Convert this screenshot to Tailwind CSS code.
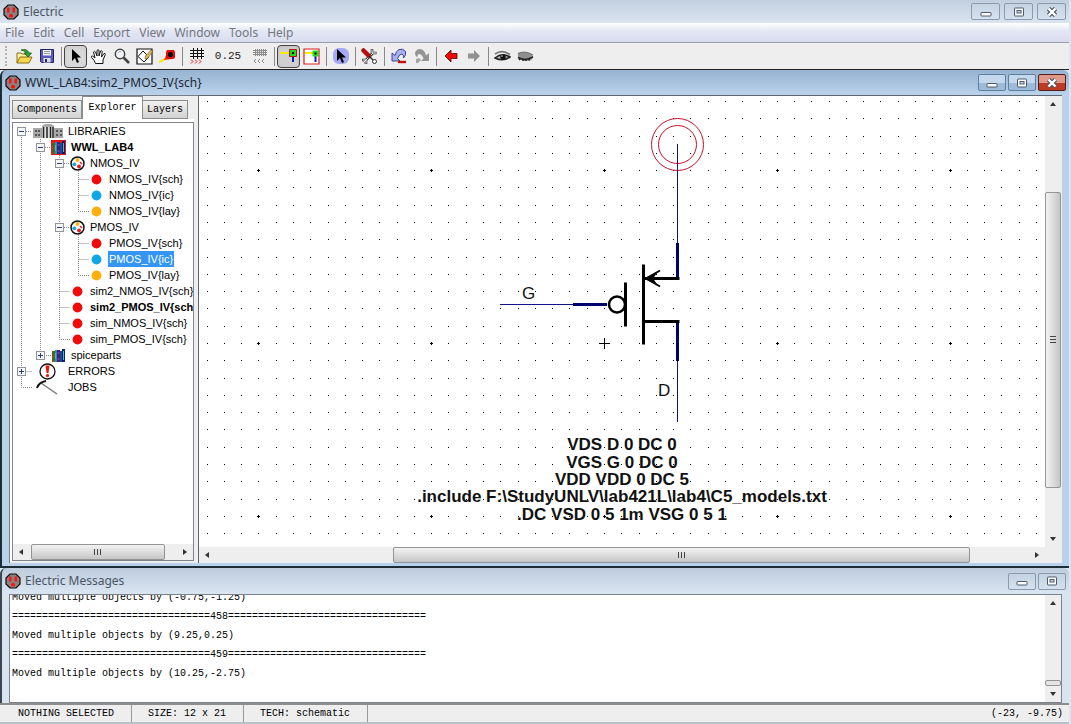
<!DOCTYPE html>
<html lang="en">
<head>
<meta charset="utf-8">
<title>Electric</title>
<script src="https://cdn.jsdelivr.net/npm/@tailwindcss/browser@4"></script>
</head>
<body class="h-screen overflow-hidden bg-[#dbe6f2] font-['Noto_Sans','Open_Sans',sans-serif] text-xs text-[#4a5563]">

<svg class="hidden" aria-hidden="true">
  <symbol id="outlet" viewBox="0 0 16 16">
    <path d="M5 1h6l4 4v6l-4 4H5l-4-4V5z" fill="#8a8380" stroke="#150808" stroke-width="1.200"/>
    <path d="M4 3.500h2.500v5H4zM9.500 3.500H12v5H9.500z" fill="#fa1414"/>
    <path d="M6 13.200v-2.200l2-1.500 2 1.500v2.200z" fill="#fa1414"/>
  </symbol>
  <symbol id="min" viewBox="0 0 12 10"><rect x="1" y="5.500" width="10" height="3.500" rx=".5" fill="#fff" stroke="#4d5a6b"/></symbol>
  <symbol id="max" viewBox="0 0 12 10"><rect x="1.500" y="1" width="9" height="8" rx=".5" fill="#fff" stroke="#4d5a6b"/><rect x="4" y="3.500" width="4" height="2.500" fill="#c9d8e8" stroke="#4d5a6b"/></symbol>
  <symbol id="close" viewBox="0 0 12 10"><path d="M2.500 1.500l7 7M9.500 1.500l-7 7" stroke="#4d5a6b" stroke-width="4.600"/><path d="M2.500 1.500l7 7M9.500 1.500l-7 7" stroke="#fff" stroke-width="2.400"/></symbol>
  <symbol id="plus" viewBox="0 0 9 9"><rect x=".5" y=".5" width="8" height="8" fill="#f6f7f9" stroke="#8f959c"/><path d="M2 4.500h5M4.500 2v5" stroke="#2b3f78"/></symbol>
  <symbol id="minus" viewBox="0 0 9 9"><rect x=".5" y=".5" width="8" height="8" fill="#f6f7f9" stroke="#8f959c"/><path d="M2 4.500h5" stroke="#2b3f78"/></symbol>
  <symbol id="cell" viewBox="0 0 15 15"><circle cx="7.500" cy="7.500" r="6.500" fill="#fff" stroke="#111" stroke-width="1.500"/><circle cx="7.500" cy="4" r="1.900" fill="#ffb010"/><circle cx="4.300" cy="8.300" r="1.900" fill="#12a6e6"/><circle cx="9" cy="10.500" r="1.900" fill="#e8141c"/><path d="M10 6l2 2" stroke="#e8141c" stroke-width="1.500"/></symbol>
  <symbol id="books" viewBox="0 0 15 15"><path d="M1 3h3v11H1z" fill="#7a5a12"/><path d="M4 2h3v12H4z" fill="#1199bb"/><path d="M6 2h3v12H6z" fill="#4b1c78"/><path d="M9 3h2v11H9z" fill="#1a4d8a"/><path d="M11 1h3v13h-3z" fill="#101c66"/><path d="M1 5h3M1 11h3" stroke="#1c6b30"/><path d="M4.500 5v6M12.500 3v9" stroke="#29c6e8"/><path d="M6.500 5h2M6.500 11h2" stroke="#c54ad0"/></symbol>
  <symbol id="ball" viewBox="0 0 15 15"><circle cx="7.500" cy="7.500" r="4.900" fill="currentColor"/></symbol>
  <symbol id="up" viewBox="0 0 8 8"><path d="M4 2l3 4H1z" fill="#333"/></symbol>
  <symbol id="down" viewBox="0 0 8 8"><path d="M4 6l3-4H1z" fill="#333"/></symbol>
  <symbol id="left" viewBox="0 0 8 8"><path d="M2 4l4-3v6z" fill="#333"/></symbol>
  <symbol id="right" viewBox="0 0 8 8"><path d="M6 4L2 1v6z" fill="#333"/></symbol>
  <symbol id="cursor" viewBox="0 0 16 16"><path d="M4 1v12l3-3 2 5 2-1-2-4.500h4z" fill="#000"/></symbol>
</svg>

<div class="flex h-full flex-col border-r-2 border-[#dbe6f2]">
  <!-- Application title bar -->
  <header class="flex h-[23px] shrink-0 items-center gap-1 bg-linear-to-b from-[#c2cfde] to-[#dae5f0] pr-[3px] pl-[3px]">
    <svg class="size-4"><use href="#outlet"/></svg>
    <h1 class="flex-1">Electric</h1>
    <div class="flex gap-1">
      <button aria-label="Minimize" class="flex h-[17px] w-[29px] items-center justify-center rounded-xs border border-[#8a9bb0]"><svg class="h-[10px] w-3"><use href="#min"/></svg></button>
      <button aria-label="Maximize" class="flex h-[17px] w-[29px] items-center justify-center rounded-xs border border-[#8a9bb0]"><svg class="h-[10px] w-3"><use href="#max"/></svg></button>
      <button aria-label="Close" class="flex h-[17px] w-[29px] items-center justify-center rounded-xs border border-[#8a9bb0]"><svg class="h-[10px] w-3"><use href="#close"/></svg></button>
    </div>
  </header>

  <nav class="flex h-5 shrink-0 items-center gap-[9px] border-b border-[#9a9cb4] bg-linear-to-b from-white via-[#e4e8f5] via-40% to-[#d8dcef] pl-[5px] text-[#75777d]">
    <button>File</button><button>Edit</button><button>Cell</button><button>Export</button><button>View</button><button>Window</button><button>Tools</button><button>Help</button>
  </nav>

  <!-- Tool bar -->
  <div role="toolbar" class="flex h-[27px] shrink-0 items-center border-b border-[#222] bg-[#eeeeee] pl-[5px]">
    <span class="mr-[5px] h-5 w-0 border-l-2 border-dotted border-[#b4b4b4]"></span>
    <button aria-label="Open library" class="flex size-[23px] items-center justify-center">
      <svg class="size-[18px]" viewBox="0 0 18 18"><path d="M2 16V6h4l1 1h6v3" fill="#fff3a8" stroke="#8a6d12"/><path d="M2 16l3-6h12l-3 6z" fill="#f6d84a" stroke="#8a6d12"/><path d="M6 3q6-2 8 3h2.500L13 10 9 6h2q-1-2.500-5-3z" fill="#2fa32f" stroke="#14601a" stroke-width=".8"/></svg></button>
    <button aria-label="Save library" class="flex size-[23px] items-center justify-center">
      <svg class="size-4" viewBox="0 0 16 16"><path d="M1.500 1.500h13v13h-12l-1-1z" fill="#5a5ab4" stroke="#22226c"/><path d="M4 2h8v5.500H4z" fill="#f4f4ff"/><path d="M5 3.500h6M5 5.500h6" stroke="#999"/><path d="M4.500 10h7v4.500h-7z" fill="#ddd"/><path d="M6 11h2v3H6z" fill="#22226c"/></svg></button>
    <span class="mr-[2px] ml-[3px] h-[19px] w-px bg-[#888]"></span>
    <button aria-label="Select" aria-pressed="true" class="flex size-[23px] items-center justify-center rounded border border-[#444] bg-[#d9d9d9] shadow-inner"><svg class="size-4"><use href="#cursor"/></svg></button>
    <button aria-label="Pan" class="flex size-[23px] items-center justify-center">
      <svg class="size-[17px]" viewBox="0 0 17 17"><path d="M5.500 15.500Q4.500 12 1.500 9.500 1 8 2.500 8L5 10 3.500 4Q4.500 2.500 5.500 4l1.500 4V2.500q1-1.500 2 0V8l1.500-5q1.300-1 1.700.5L11.500 9 14 5.500q1.500-.5 1.300 1L13 12v3.500z" fill="#fff" stroke="#111"/></svg></button>
    <button aria-label="Zoom" class="flex size-[23px] items-center justify-center">
      <svg class="size-4" viewBox="0 0 16 16"><circle cx="6" cy="6" r="4.700" fill="#f2f6fa" stroke="#444" stroke-width="1.500"/><path d="M9.500 9.500L15 15" stroke="#444" stroke-width="2.600"/><path d="M4 5q1-2 3-1.500" stroke="#aaa" fill="none"/></svg></button>
    <button aria-label="Outline edit" class="flex size-[23px] items-center justify-center">
      <svg class="size-[17px]" viewBox="0 0 17 17"><path d="M1 1h15v15H1z" fill="#fff" stroke="#111" stroke-width="1.200"/><path d="M7 3L2 8.500 8 14l5-5z" fill="none" stroke="#111"/><path d="M9.500 8L15 2l1.500 1.500L12 10l-3 1z" fill="#e6b45c" stroke="#7a5a20" stroke-width=".6"/></svg></button>
    <button aria-label="Measure" class="flex size-[23px] items-center justify-center">
      <svg class="size-[17px]" viewBox="0 0 17 17"><path d="M0 14l8-4" stroke="#ffe600" stroke-width="2"/><path d="M5 12l3-7 5 6z" fill="#f03018"/><path d="M8 2h7l1 2v6l-2 1H8L7 9V4z" fill="#e00f0f"/><circle cx="11.500" cy="6.500" r="2.600" fill="#000"/></svg></button>
    <span class="mr-[2px] ml-[3px] h-[19px] w-px bg-[#888]"></span>
    <button aria-label="Coarser grid" class="flex size-[23px] items-center justify-center">
      <svg class="size-4" viewBox="0 0 16 16" fill="none"><path d="M1 2.500h14M1 5.500h14M1 8.500h14M4.500 0v11M8.500 0v11M12.500 0v11" stroke="#111"/><path d="M2 11.500l2 2-2 2M6 11.500l2 2-2 2M10 11.500l2 2-2 2" stroke="#e0181c"/></svg></button>
    <span class="w-10 text-center font-['Liberation_Mono',monospace] text-[11px] text-[#222]">0.25</span>
    <button aria-label="Finer grid" class="flex size-[23px] items-center justify-center">
      <svg class="size-4" viewBox="0 0 16 16" fill="none" stroke="#8c8c8c"><path d="M1 2.500h14M1 4.500h14M1 6.500h14M3.500 1v7M5.500 1v7M7.500 1v7M9.500 1v7M11.500 1v7M13.500 1v7"/><path d="M4 11l-2 2 2 2M8 11l-2 2 2 2M12 11l-2 2 2 2"/></svg></button>
    <span class="mr-[2px] ml-[3px] h-[19px] w-px bg-[#888]"></span>
    <button aria-label="Select objects" aria-pressed="true" class="flex size-[23px] items-center justify-center rounded border border-[#444] bg-[#d0d0d0] shadow-inner">
      <svg class="size-[17px]" viewBox="0 0 17 17"><path d="M0 5h9" stroke="#f8f000" stroke-width="2"/><path d="M13 8v6" stroke="#1414c8" stroke-width="2"/><path d="M9.500 1.500h7v7h-7z" fill="#20d820" stroke="#b81414"/><path d="M12 4h2v2h-2z" fill="#000"/></svg></button>
    <button aria-label="Select area" class="flex size-[23px] items-center justify-center">
      <svg class="size-[17px]" viewBox="0 0 17 17"><path d="M1 1h15v15H1z" fill="#fff" stroke="#d82020" stroke-width="1.200"/><path d="M2 5h8" stroke="#f8f000" stroke-width="2"/><path d="M12.500 8v6" stroke="#1414c8" stroke-width="2"/><path d="M9.500 2.500h6v6h-6z" fill="#20e020"/><path d="M11.500 4.500h2v2h-2z" fill="#000"/></svg></button>
    <span class="mr-[2px] ml-[3px] h-[19px] w-px bg-[#888]"></span>
    <button aria-label="Toggle special select" class="flex size-[23px] items-center justify-center"><svg class="size-4 rounded-md bg-[#a6a9f6]"><use href="#cursor"/></svg></button>
    <span class="mr-[2px] ml-[3px] h-[19px] w-px bg-[#888]"></span>
    <button aria-label="Preferences" class="flex size-[23px] items-center justify-center">
      <svg class="size-[17px]" viewBox="0 0 17 17" fill="none"><path d="M3 14l9-9M11 1v4h4.500M1 12h4v4" stroke="#333" stroke-width="2.600"/><path d="M3 14l9-9M11 1.500V5h4M1.500 12H5v3.500" stroke="#fff" stroke-width="1"/><path d="M2.500 2.500l5 5" stroke="#b80c10" stroke-width="4.500" stroke-linecap="round"/><path d="M8 8l4 4" stroke="#333" stroke-width="1.500"/><circle cx="13.500" cy="13.500" r="2" fill="#fff" stroke="#333"/></svg></button>
    <span class="mr-[2px] ml-[3px] h-[19px] w-px bg-[#888]"></span>
    <button aria-label="Undo" class="flex size-[23px] items-center justify-center">
      <svg class="size-4" viewBox="0 0 16 16"><path d="M1 5v8h8L6.500 10.500Q8 6 11 6q2 .5 1.500 4 3-3 2-6.500Q12 0 8 1.500 5 3 4 7.500z" fill="#a7b2ee" stroke="#2c3590" stroke-width=".9"/><path d="M7 14h8" stroke="#c01414" stroke-width="2.400"/></svg></button>
    <button aria-label="Redo" class="flex size-[23px] items-center justify-center">
      <svg class="size-4" viewBox="0 0 16 16"><path d="M15 5v8H7l2.500-2.500Q8 6 5 6q-2 .5-1.500 3.500Q0 7 1.500 3.500 4 0 8 1.500q3 1.500 4 6z" fill="#949494"/><path d="M2 11q4-2 5 1l-3 3H2z" fill="#a4a4a4"/></svg></button>
    <span class="mr-[2px] ml-[3px] h-[19px] w-px bg-[#888]"></span>
    <button aria-label="Back" class="flex size-[23px] items-center justify-center"><svg class="size-[14px]" viewBox="0 0 14 14"><path d="M1 7l6-6v3.500h6v5H7V13z" fill="#f00808" stroke="#550000" stroke-width=".8"/></svg></button>
    <button aria-label="Forward" class="flex size-[23px] items-center justify-center"><svg class="size-[14px]" viewBox="0 0 14 14"><path d="M13 7L7 1v3.500H1v5h6V13z" fill="#919191"/></svg></button>
    <span class="mr-[2px] ml-[3px] h-[19px] w-px bg-[#888]"></span>
    <button aria-label="Expand" class="flex size-[23px] items-center justify-center">
      <svg class="size-[17px]" viewBox="0 0 17 17" fill="none"><path d="M1 6Q8 1 16 6.500" stroke="#777" stroke-width="1.600"/><path d="M1 10Q8 4 16 9 9 14 1 10z" fill="#b4b4b4" stroke="#222" stroke-width="1.600"/><circle cx="9" cy="9" r="2.700" fill="#111"/><circle cx="8" cy="8" r=".7" fill="#fff"/></svg></button>
    <button aria-label="Unexpand" class="flex size-[23px] items-center justify-center">
      <svg class="size-[17px]" viewBox="0 0 17 17" fill="none"><path d="M1 5Q9 2 16 8q0 3-3 4.500Q5 14 1 9z" fill="#8f8f8f"/><path d="M1 5.500Q8 2 16 7" stroke="#777" stroke-width="1.200"/><path d="M1 9.500q7 4 15-.5M3 11l-1 1M6 12v1M9 12v1M12 11.500l.5 1" stroke="#222" stroke-width="1.500"/></svg></button>
  </div>

  <!-- Schematic editor window -->
  <section class="flex min-h-0 flex-1 flex-col rounded-t-md border-b-2 border-l-2 border-[#1b2e38] bg-linear-to-b from-[#97b3d1] to-[#b9d1ea] to-[24px] pr-[7px] pb-[3px] pl-[7px]">
    <header class="flex h-[25px] shrink-0 items-center gap-1 text-[#1c2733]">
      <svg class="-ml-1 size-4"><use href="#outlet"/></svg>
      <h2 class="flex-1">WWL_LAB4:sim2_PMOS_IV{sch}</h2>
      <div class="-mr-1 flex gap-[2px]">
        <button aria-label="Minimize" class="flex h-[17px] w-7 items-center justify-center rounded-xs border border-[#5f7f9f] bg-linear-to-b from-[#c3d8ec] from-50% to-[#9dbbd8] to-50%"><svg class="h-[10px] w-3"><use href="#min"/></svg></button>
        <button aria-label="Maximize" class="flex h-[17px] w-7 items-center justify-center rounded-xs border border-[#5f7f9f] bg-linear-to-b from-[#c3d8ec] from-50% to-[#9dbbd8] to-50%"><svg class="h-[10px] w-3"><use href="#max"/></svg></button>
        <button aria-label="Close" class="flex h-[17px] w-7 items-center justify-center rounded-xs border border-[#551d1c] bg-linear-to-b from-[#e0988a] from-50% to-[#bb3b24] to-50%"><svg class="h-[10px] w-3"><use href="#close"/></svg></button>
      </div>
    </header>

    <div class="flex min-h-0 flex-1">
      <!-- Explorer side panel -->
      <aside class="flex w-[189px] shrink-0 flex-col border-t border-l border-[#777e88] bg-[#eeeeee] pb-[2px]">
        <div role="tablist" class="flex h-[23px] items-end pl-[2px] font-['Liberation_Mono',monospace] text-[10px] text-black">
          <button role="tab" class="h-[19px] w-[70px] border border-[#8c8c8c] bg-linear-to-b from-[#f2f2f2] to-[#d2d2d2]">Components</button>
          <button role="tab" aria-selected="true" class="h-[23px] w-[61px] border-x border-t border-[#8c8c8c] bg-white">Explorer</button>
          <button role="tab" class="h-[19px] w-[45px] border border-l-0 border-[#8c8c8c] bg-linear-to-b from-[#f2f2f2] to-[#d2d2d2]">Layers</button>
        </div>
        <div class="mr-1 flex min-h-0 flex-1 flex-col bg-white pt-[3px]">
          <div class="ml-[2px] flex min-h-0 flex-1 flex-col border border-[#82858d]">
            <div class="relative min-h-0 flex-1 overflow-hidden font-['Liberation_Sans',Arial,sans-serif] text-[11px] whitespace-nowrap text-black">
              <svg class="absolute inset-0 h-[272px] w-full" fill="none" stroke="#8a8a8a" stroke-dasharray="1 1" aria-hidden="true">
                <path d="M8.500 12v252.500H19M8.500 248.500H19M13 8.500h6M27.500 16v216.500H38M32 24.500h6M46.500 32v184.500H57M51 40.500h6M51 104.500h6M46.500 168.500H57M46.500 184.500H57M46.500 200.500H57M65.500 48v40.500H76M65.500 56.500H76M65.500 72.500H76M65.500 112v40.500H76M65.500 120.500H76M65.500 136.500H76"/>
              </svg>
              <ul role="tree" class="relative [&>li]:flex [&>li]:h-4 [&>li]:items-center">
                <li role="treeitem" class="pl-1"><svg class="mr-[6px] size-[9px]"><use href="#minus"/></svg>
                  <svg class="mr-1 h-[14px] w-8" viewBox="0 0 32 14"><path d="M1 4h9V2l3-2h6l3 2v2h9v10H1z" fill="#a8a8a8"/><path d="M10 3h12v11H10z" fill="#ddd"/><path d="M11.500 3v11M15 3v11M18.500 3v11M21 3v11" stroke="#222" stroke-width="1.500"/><path d="M3 6h2v2H3zM6 6h2v2H6zM3 10h2v2H3zM6 10h2v2H6zM24 6h2v2h-2zM28 6h2v2h-2zM24 10h2v2h-2zM28 10h2v2h-2z" fill="#555"/></svg>LIBRARIES</li>
                <li role="treeitem" class="pl-[23px] font-bold"><svg class="mr-[6px] size-[9px]"><use href="#minus"/></svg><svg class="mr-[5px] size-[15px] bg-[#e01818]"><use href="#books"/></svg>WWL_LAB4</li>
                <li role="treeitem" class="pl-[42px]"><svg class="mr-[6px] size-[9px]"><use href="#minus"/></svg><svg class="mr-[5px] size-[15px]"><use href="#cell"/></svg>NMOS_IV</li>
                <li role="treeitem" class="pl-[76px]"><svg class="mr-1 size-[15px] text-[#f00a0a]"><use href="#ball"/></svg><span class="px-px">NMOS_IV{sch}</span></li>
                <li role="treeitem" class="pl-[76px]"><svg class="mr-1 size-[15px] text-[#0fa5e6]"><use href="#ball"/></svg><span class="px-px">NMOS_IV{ic}</span></li>
                <li role="treeitem" class="pl-[76px]"><svg class="mr-1 size-[15px] text-[#ffae0a]"><use href="#ball"/></svg><span class="px-px">NMOS_IV{lay}</span></li>
                <li role="treeitem" class="pl-[42px]"><svg class="mr-[6px] size-[9px]"><use href="#minus"/></svg><svg class="mr-[5px] size-[15px]"><use href="#cell"/></svg>PMOS_IV</li>
                <li role="treeitem" class="pl-[76px]"><svg class="mr-1 size-[15px] text-[#f00a0a]"><use href="#ball"/></svg><span class="px-px">PMOS_IV{sch}</span></li>
                <li role="treeitem" aria-selected="true" class="pl-[76px]"><svg class="mr-1 size-[15px] text-[#0fa5e6]"><use href="#ball"/></svg><span class="h-4 bg-[#3595f2] px-px leading-4 text-white">PMOS_IV{ic}</span></li>
                <li role="treeitem" class="pl-[76px]"><svg class="mr-1 size-[15px] text-[#ffae0a]"><use href="#ball"/></svg><span class="px-px">PMOS_IV{lay}</span></li>
                <li role="treeitem" class="pl-[57px]"><svg class="mr-[5px] size-[15px] shrink-0 text-[#f00a0a]"><use href="#ball"/></svg>sim2_NMOS_IV{sch}</li>
                <li role="treeitem" class="pl-[57px] font-bold"><svg class="mr-[5px] size-[15px] shrink-0 text-[#f00a0a]"><use href="#ball"/></svg>sim2_PMOS_IV{sch}</li>
                <li role="treeitem" class="pl-[57px]"><svg class="mr-[5px] size-[15px] text-[#f00a0a]"><use href="#ball"/></svg>sim_NMOS_IV{sch}</li>
                <li role="treeitem" class="pl-[57px]"><svg class="mr-[5px] size-[15px] text-[#f00a0a]"><use href="#ball"/></svg>sim_PMOS_IV{sch}</li>
                <li role="treeitem" class="pl-[23px]"><svg class="mr-[6px] size-[9px]"><use href="#plus"/></svg><svg class="mr-[5px] size-[15px]"><use href="#books"/></svg>spiceparts</li>
                <li role="treeitem" class="pl-1"><svg class="mr-[13px] size-[9px]"><use href="#plus"/></svg>
                  <svg class="mr-[12px] size-[17px]" viewBox="0 0 17 17"><circle cx="8.500" cy="8.500" r="7.500" fill="#fff" stroke="#111" stroke-width="1.300"/><path d="M6.500 2.500h4l-1 7.500h-2z" fill="#f01010"/><circle cx="8.500" cy="12.600" r="1.600" fill="#f01010"/></svg>ERRORS</li>
                <li role="treeitem" class="pl-[23px]"><svg class="mr-[10px] h-4 w-[22px]" viewBox="0 0 22 16" fill="none"><path d="M5 4l16 11" stroke="#777" stroke-width="1.500"/><path d="M1 9Q3 3 10 2" stroke="#111" stroke-width="2"/></svg>JOBS</li>
              </ul>
            </div>
            <div class="flex h-4 shrink-0 bg-[#eeeeee]">
              <svg class="m-1 size-2 shrink-0"><use href="#left"/></svg>
              <span class="grow-[2]"></span>
              <span class="flex grow-[131] basis-0 items-center justify-center gap-[2px] rounded-xs border border-[#949494] bg-linear-to-b from-[#f3f3f3] to-[#c6c6c6]"><i class="h-[6px] w-px bg-[#444]"></i><i class="h-[6px] w-px bg-[#444]"></i><i class="h-[6px] w-px bg-[#444]"></i></span>
              <span class="grow-[12]"></span>
              <svg class="m-1 size-2 shrink-0"><use href="#right"/></svg>
            </div>
          </div>
        </div>
      </aside>

      <!-- Drawing canvas with its scroll bars -->
      <main class="flex min-w-0 flex-1 border-t border-l border-[#5f6670] bg-[#eeeeee] pr-px">
        <div class="flex min-w-0 flex-1 flex-col">
          <div class="relative min-h-0 flex-1 overflow-hidden bg-white">
            <svg class="absolute inset-0 h-full w-full font-['Liberation_Sans',Arial,sans-serif]" fill="none" aria-label="PMOS transistor schematic">
              <path id="grid" fill="#000" shape-rendering="crispEdges"/>
              <circle cx="478.500" cy="48.500" r="26" stroke="#c8102a"/>
              <circle cx="478.500" cy="48.500" r="19" stroke="#c8102a"/>
              <path d="M478.500 48v100M478.500 264v62M301 208.500h74" stroke="#10108c"/>
              <path d="M478.500 147v36M478.500 226v39M374 208.500h34" stroke="#00006e" stroke-width="3"/>
              <path d="M444.500 170v77M426.500 188v41M445 182.500h34M445 225.500h34" stroke="#000" stroke-width="3" stroke-linecap="square"/>
              <path d="M447 182.500l14-8M447 182.500l14 8" stroke="#000" stroke-width="2"/>
              <path d="M445 182.500l14-7-5 7 5 7z" fill="#000"/>
              <circle cx="418" cy="208.500" r="8" fill="#fff" stroke="#000" stroke-width="2.500"/>
              <path d="M400 247.500h11M405.500 242v11" stroke="#000"/>
              <g fill="#111" font-size="17"><text x="323" y="203">G</text><text x="459" y="300">D</text></g>
              <g fill="#111" font-size="17" font-weight="bold" text-anchor="middle">
                <text x="423" y="354">VDS D 0 DC 0</text>
                <text x="423" y="372">VGS G 0 DC 0</text>
                <text x="423" y="389">VDD VDD 0 DC 5</text>
                <text x="423" y="406">.include F:\StudyUNLV\lab421L\lab4\C5_models.txt</text>
                <text x="423" y="424">.DC VSD 0 5 1m VSG 0 5 1</text>
              </g>
            </svg>
          </div>
          <div class="flex h-4 shrink-0">
            <svg class="m-1 size-2 shrink-0"><use href="#left"/></svg>
            <span class="grow-[178]"></span>
            <span class="flex grow-[577] basis-0 items-center justify-center gap-[2px] rounded-xs border border-[#949494] bg-linear-to-b from-[#f3f3f3] to-[#c6c6c6]"><i class="h-[6px] w-px bg-[#444]"></i><i class="h-[6px] w-px bg-[#444]"></i><i class="h-[6px] w-px bg-[#444]"></i></span>
            <span class="grow-[59]"></span>
            <svg class="m-1 size-2 shrink-0"><use href="#right"/></svg>
          </div>
        </div>
        <div class="mb-4 flex w-4 shrink-0 flex-col">
          <svg class="m-1 size-2 shrink-0"><use href="#up"/></svg>
          <span class="grow-[80]"></span>
          <span class="flex grow-[295] basis-0 flex-col items-center justify-center gap-[2px] rounded-xs border border-[#949494] bg-linear-to-r from-[#f3f3f3] to-[#c6c6c6]"><i class="h-px w-[6px] bg-[#444]"></i><i class="h-px w-[6px] bg-[#444]"></i><i class="h-px w-[6px] bg-[#444]"></i></span>
          <span class="grow-[43]"></span>
          <svg class="m-1 size-2 shrink-0"><use href="#down"/></svg>
        </div>
      </main>
    </div>
  </section>

  <!-- Messages window -->
  <section class="flex h-[135px] shrink-0 flex-col rounded-t-md border-l-2 border-[#3a4650] bg-linear-to-b from-[#bdcbdc] to-[#d8e4f0] to-[24px] pr-[7px] pl-[7px]">
    <header class="flex h-[26px] shrink-0 items-center gap-1">
      <svg class="-ml-1 size-4"><use href="#outlet"/></svg>
      <h2 class="flex-1">Electric Messages</h2>
      <div class="-mr-1 flex gap-[2px]">
        <button aria-label="Minimize" class="flex h-[17px] w-7 items-center justify-center rounded-xs border border-[#8a9bb0]"><svg class="h-[10px] w-3"><use href="#min"/></svg></button>
        <button aria-label="Maximize" class="flex h-[17px] w-7 items-center justify-center rounded-xs border border-[#8a9bb0]"><svg class="h-[10px] w-3"><use href="#max"/></svg></button>
      </div>
    </header>
    <div class="flex min-h-0 flex-1 border border-[#7b828c] bg-white">
      <div class="flex-1 overflow-hidden pl-[2px] font-['Liberation_Mono',monospace] text-[10px] leading-[19px] text-black">
        <p class="-mt-[7px]">Moved multiple objects by (-0.75,-1.25)</p>
        <p>=================================458=================================</p>
        <p>Moved multiple objects by (9.25,0.25)</p>
        <p>=================================459=================================</p>
        <p>Moved multiple objects by (10.25,-2.75)</p>
      </div>
      <div class="flex w-4 shrink-0 flex-col bg-[#eeeeee]">
        <svg class="m-1 size-2 shrink-0"><use href="#up"/></svg>
        <span class="flex-1"></span>
        <span class="h-[6px] shrink-0 rounded-xs border border-[#949494] bg-[#e4e4e4]"></span>
        <svg class="m-1 size-2 shrink-0"><use href="#down"/></svg>
      </div>
    </div>
  </section>

  <!-- Status bar -->
  <footer class="flex h-[21px] shrink-0 items-center border-t-2 border-b-2 border-t-[#8d8d8d] border-b-[#b9c0c8] bg-[#eeeeee] font-['Liberation_Mono',monospace] text-[10px] text-black">
    <span class="flex h-full w-[132px] items-center border-r border-[#999] pl-[18px]">NOTHING SELECTED</span>
    <span class="flex h-full w-28 items-center border-r border-[#999] pl-4">SIZE: 12 x 21</span>
    <span class="flex h-full w-[124px] items-center border-r border-[#999] pl-4">TECH: schematic</span>
    <span class="ml-auto pr-[6px]">(-23, -9.75)</span>
  </footer>
</div>

<script>
  // Grid dots every 17.28 units around the origin; each tenth one is a small cross.
  const ox = 405, oy = 247, step = 17.28;
  let d = '';
  for (let i = -23; i <= 25; i++) {
    for (let j = -14; j <= 11; j++) {
      const x = Math.round(ox + i * step), y = Math.round(oy + j * step);
      d += `M${x} ${y}h1v1h-1z`;
      if (i % 10 === 0 && j % 10 === 0) d += `M${x - 1} ${y}h3v1h-3zM${x} ${y - 1}h1v3h-1z`;
    }
  }
  document.getElementById('grid').setAttribute('d', d);
</script>
</body>
</html>
